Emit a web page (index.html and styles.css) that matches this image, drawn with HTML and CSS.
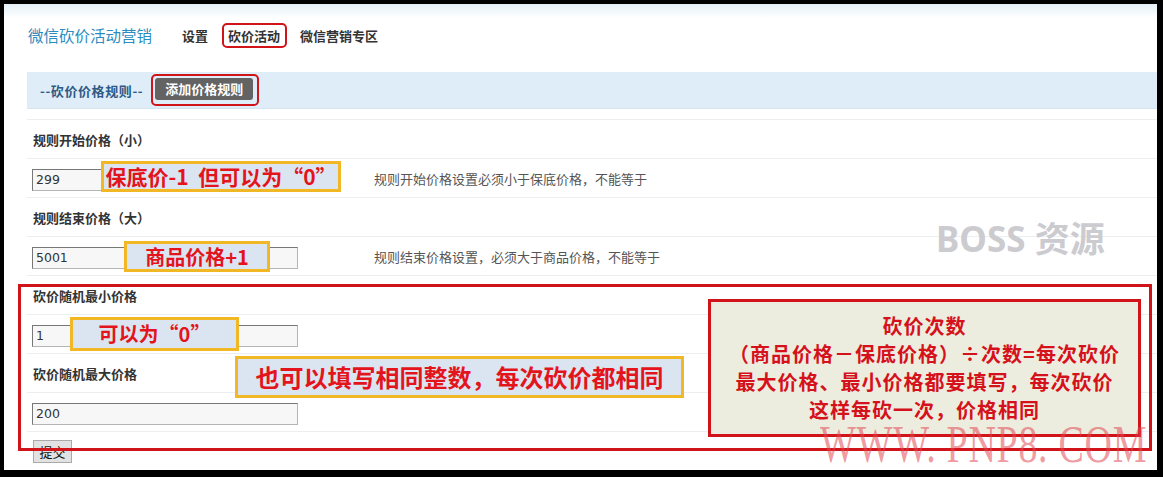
FILE: index.html
```html
<!DOCTYPE html>
<html lang="zh-CN">
<head>
    <meta charset="UTF-8">
    <title>微信砍价活动营销</title>
    <link rel="stylesheet" href="styles.css">
</head>
<body>

    <div class="page">
        <!-- 顶部导航 -->
        <div class="header">
            <span class="title">微信砍价活动营销</span>
            <span class="nav-item">设置</span>
            <span class="nav-item nav-ring">砍价活动</span>
            <span class="nav-item nav-last">微信营销专区</span>
        </div>

        <div class="content">
            <div class="rule-bar">
                <span class="rule-title">--砍价价格规则--</span>
                <span class="btn-ring"><span class="add-btn">添加价格规则</span></span>
            </div>

            <div class="form-table">
                <div class="row"><span class="label">规则开始价格（小）</span></div>
                <div class="row">
                    <div class="cell-left"><input class="field" type="text" value="299"></div>
                    <div class="cell-help">规则开始价格设置必须小于保底价格，不能等于</div>
                </div>
                <div class="row"><span class="label">规则结束价格（大）</span></div>
                <div class="row">
                    <div class="cell-left"><input class="field" type="text" value="5001"></div>
                    <div class="cell-help">规则结束价格设置，必须大于商品价格，不能等于</div>
                </div>
                <div class="row"><span class="label">砍价随机最小价格</span></div>
                <div class="row">
                    <div class="cell-left"><input class="field" type="text" value="1"></div>
                </div>
                <div class="row"><span class="label">砍价随机最大价格</span></div>
                <div class="row">
                    <div class="cell-left"><input class="field" type="text" value="200"></div>
                </div>
            </div>

            <button class="submit-btn">提交</button>
        </div>

        <!-- 标注 -->
        <div class="red-frame"></div>
        <div class="note note1">保底价-1&nbsp; 但可以为“0”</div>
        <div class="note note2">商品价格+1</div>
        <div class="note note3">可以为“0”</div>
        <div class="note note4">也可以填写相同整数，每次砍价都相同</div>

        <div class="tip-box">
            砍价次数<br>
            （商品价格－保底价格）÷次数=每次砍价<br>
            最大价格、最小价格都要填写，每次砍价<br>
            这样每砍一次，价格相同
        </div>

        <span class="mark-boss">BOSS 资源</span>
        <span class="mark-www">WWW. PNP8. COM</span>
    </div>

</body>
</html>
```

FILE: styles.css
```css
body {
    margin: 0;
    background-color: #000;
    padding: 4px 6px 7px 4px;
    font-family: "Noto Sans CJK SC", "Noto Sans", sans-serif;
}

.page {
    position: relative;
    width: 1153px;
    height: 466px;
    overflow: hidden;
    background: linear-gradient(#e3f0f7, #ffffff 14px);
}

/* 顶部 */
.header {
    height: 62px;
    padding: 0 0 6px 24px;
    display: flex;
    align-items: center;
}

.title {
    font-size: 15.5px;
    color: #2c8cc0;
    margin-right: 30px;
}

.nav-item {
    font-size: 13px;
    font-weight: bold;
    color: #333;
}

.nav-ring {
    margin-left: 14px;
    padding: 1px 5px 1px 4px;
    border: 2px solid #d0141a;
    border-radius: 5px;
}

.nav-last {
    margin-left: 13px;
}

/* 规则栏 */
.content {
    margin-left: 23px;
}

.rule-bar {
    height: 37px;
    background-color: #deedf7;
    border-bottom: 1px solid #d3e4f0;
    box-sizing: border-box;
    padding-left: 13px;
    display: flex;
    align-items: center;
}

.rule-title {
    font-size: 13px;
    font-weight: bold;
    letter-spacing: 0.6px;
    color: #2f5a86;
}

.btn-ring {
    margin-left: 8px;
    padding: 2px 4px 4px 2px;
    border: 2px solid #d0141a;
    border-radius: 5px;
    display: flex;
}

.add-btn {
    width: 98px;
    height: 22px;
    line-height: 22px;
    text-align: center;
    background-color: #636363;
    border-radius: 3px;
    color: #fff;
    font-size: 13px;
    font-weight: bold;
}

/* 表单 */
.form-table {
    margin-top: 10px;
    border-top: 1px solid #eceff2;
}

.row {
    height: 38px;
    border-bottom: 1px solid #eceff2;
    display: flex;
    align-items: center;
}

.label {
    padding-left: 6px;
    font-size: 13px;
    font-weight: bold;
    color: #333;
}

.cell-left {
    width: 341px;
    padding-left: 5px;
    box-sizing: border-box;
}

.cell-help {
    padding-left: 6px;
    font-size: 13px;
    color: #555;
}

.field {
    width: 266px;
    height: 22px;
    box-sizing: border-box;
    margin: 0;
    padding: 0 3px;
    border: 1px solid #b5b5b5;
    border-top-color: #777;
    border-left-color: #777;
    background-color: #f7f7f7;
    font-family: "DejaVu Sans", sans-serif;
    font-size: 12.5px;
    color: #333;
}

.submit-btn {
    margin: 8px 0 0 6px;
    width: 39px;
    height: 23px;
    padding: 0;
    background-color: #e2e2e2;
    border: 1px solid #aaa;
    font-family: "Noto Sans CJK SC", sans-serif;
    font-size: 13px;
    color: #111;
}

/* 标注 */
.red-frame {
    position: absolute;
    left: 14px;
    top: 280px;
    width: 1134px;
    height: 167px;
    box-sizing: border-box;
    border: 3px solid #d0141a;
}

.note {
    position: absolute;
    box-sizing: border-box;
    background-color: #dbe5f1;
    border: 3px solid #f2b724;
    color: #e3141b;
    font-weight: bold;
    text-align: center;
    white-space: nowrap;
}

.note1 {
    left: 97px;
    top: 157px;
    width: 240px;
    height: 31px;
    font-size: 21px;
    line-height: 25px;
}

.note2 {
    left: 120px;
    top: 237px;
    width: 146px;
    height: 31px;
    font-size: 20px;
    line-height: 25px;
}

.note3 {
    left: 66px;
    top: 313px;
    width: 169px;
    height: 34px;
    font-size: 20px;
    line-height: 28px;
}

.note4 {
    left: 231px;
    top: 352px;
    width: 449px;
    height: 42px;
    font-size: 24px;
    line-height: 36px;
}

.tip-box {
    position: absolute;
    left: 704px;
    top: 295px;
    width: 433px;
    height: 138px;
    box-sizing: border-box;
    padding-top: 10px;
    background-color: #ededdf;
    border: 3px solid #d0141a;
    color: #d5121b;
    font-size: 20px;
    font-weight: bold;
    line-height: 28px;
    letter-spacing: 1px;
    text-align: center;
}

/* 水印 */
.mark-boss {
    position: absolute;
    left: 932px;
    top: 207px;
    font-family: "Noto Sans", "Noto Sans CJK SC", sans-serif;
    font-size: 35px;
    font-weight: bold;
    color: #cbcbd0;
    white-space: nowrap;
}

.mark-www {
    position: absolute;
    left: 816px;
    top: 413px;
    font-family: "Liberation Serif", serif;
    font-size: 38px;
    line-height: 38px;
    letter-spacing: 0.7px;
    color: rgba(225, 70, 80, 0.55);
    white-space: nowrap;
    transform: scaleY(1.4);
    transform-origin: left top;
}
```
